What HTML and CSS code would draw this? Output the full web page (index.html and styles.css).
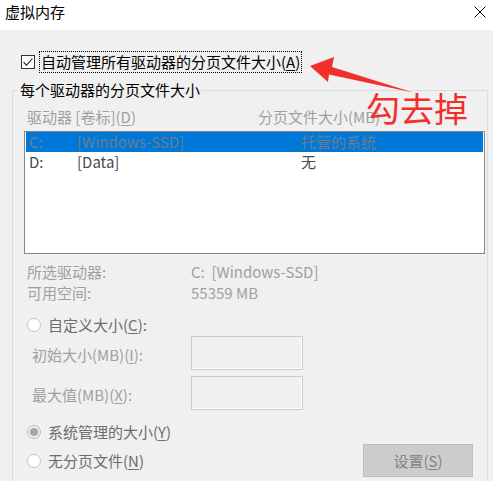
FILE: index.html
```html
<!DOCTYPE html>
<html lang="zh-CN">
<head>
<meta charset="utf-8">
<title>虚拟内存</title>
<link rel="stylesheet" href="styles.css">
</head>
<body>
<div class="window">
  <div class="titlebar">
    <span class="title">虚拟内存</span>
    <svg class="close" width="12" height="12" viewBox="0 0 12 12"><path d="M0.5 0.5L11.5 11.5M11.5 0.5L0.5 11.5" stroke="#000" stroke-width="1" fill="none"/></svg>
  </div>
  <div class="content">
    <div class="auto-row">
      <span class="checkbox"><svg width="12" height="12" viewBox="0 0 12 12"><path d="M1.5 6.2L4.5 9.2L10.5 2.5" stroke="#222" stroke-width="1.1" fill="none"/></svg></span>
      <span class="focus">自动管理所有驱动器的分页文件大小(<u>A</u>)</span>
    </div>
    <fieldset class="group">
      <legend>每个驱动器的分页文件大小</legend>
      <div class="group-body">
        <div class="col-head"><span>驱动器 [卷标](<u>D</u>)</span><span>分页文件大小(MB)</span></div>
        <div class="list">
          <div class="row sel"><span>C:</span><span>[Windows-SSD]</span><span>托管的系统</span></div>
          <div class="row"><span>D:</span><span>[Data]</span><span>无</span></div>
        </div>
        <div class="info">
          <span>所选驱动器:</span><span>C:&nbsp; [Windows-SSD]</span>
          <span>可用空间:</span><span>55359 MB</span>
        </div>
        <div class="radio-row first"><span class="radio"></span><span class="rlabel">自定义大小(<u>C</u>):</span></div>
        <div class="size-row"><span class="slabel">初始大小(MB)(<u>I</u>):</span><span class="sbox"></span></div>
        <div class="size-row second"><span class="slabel">最大值(MB)(<u>X</u>):</span><span class="sbox"></span></div>
        <div class="radio-row sys"><span class="radio checked"></span><span class="rlabel">系统管理的大小(<u>Y</u>)</span></div>
        <div class="last-row">
          <div class="radio-inline"><span class="radio"></span><span class="rlabel">无分页文件(<u>N</u>)</span></div>
          <span class="btn">设置(<u>S</u>)</span>
        </div>
      </div>
    </fieldset>
  </div>
  <svg class="arrow" width="493" height="481" viewBox="0 0 493 481">
    <polygon points="310,66 334,57 332,67 413,92.5 329,74.5 328,82" fill="#f0302a"/>
  </svg>
  <div class="note">勾去掉</div>
</div>
</body>
</html>
```
FILE: styles.css
```css
* { box-sizing: border-box; }
html, body { margin: 0; padding: 0; }
body {
  background: #f0f0f0;
  font-family: "Noto Sans CJK SC", "Noto Sans", sans-serif;
  font-size: 15px;
  color: #000;
}
u { text-underline-offset: 2px; text-decoration-thickness: 1px; }
.window {
  position: relative;
  width: 493px;
  height: 481px;
  overflow: hidden;
  background: #f0f0f0;
}
.titlebar {
  height: 30px;
  background: #fff;
  display: flex;
  justify-content: space-between;
  align-items: flex-start;
  padding: 0 7px 0 5px;
}
.title { line-height: 20px; margin-top: 2px; }
.close { margin-top: 6px; }
.content { padding-top: 21px; }
.auto-row {
  display: flex;
  align-items: center;
  margin-left: 21px;
  height: 22px;
}
.checkbox {
  width: 14px;
  height: 14px;
  border: 1px solid #333;
  background: #fff;
  margin-right: 4px;
  display: flex;
  align-items: center;
  justify-content: center;
}
.focus {
  border: 1px dotted #000;
  padding: 0 1px;
  line-height: 20px;
}
.group {
  margin: 7px 5px 0 12px;
  padding: 0;
  border: 1px solid #dcdcdc;
  min-width: 0;
  height: 420px;
}
.group legend {
  margin-left: 5px;
  padding: 0 2px;
  line-height: 20px;
}
.group-body { padding: 7px 2px 0 11px; }
.col-head {
  display: grid;
  grid-template-columns: 231px 1fr;
  padding-left: 3px;
  line-height: 20px;
  color: #a0a0a0;
}
.list {
  margin-top: 4px;
  height: 123px;
  border: 1px solid #828790;
  background: #fff;
  padding: 0 1px;
}
.row {
  display: grid;
  grid-template-columns: 48px 224px 1fr;
  padding-left: 3px;
  height: 20px;
  line-height: 20px;
  color: #4a4a4a;
}
.row.sel { background: #0078d7; color: #6a7d92; }
.info {
  margin-top: 7px;
  display: grid;
  grid-template-columns: 164px 1fr;
  padding-left: 3px;
  line-height: 21px;
  color: #a0a0a0;
}
.radio-row, .radio-inline {
  display: flex;
  align-items: center;
  height: 20px;
  line-height: 20px;
}
.radio-row.first { margin-top: 12px; }
.radio-row.sys { margin-top: 12px; }
.radio {
  width: 14px;
  height: 14px;
  border-radius: 50%;
  border: 1px solid #c4c4c4;
  background: #fff;
  margin-left: 3px;
  margin-right: 7px;
  flex: none;
  display: flex;
  align-items: center;
  justify-content: center;
}
.radio.checked::after {
  content: "";
  width: 8px;
  height: 8px;
  border-radius: 50%;
  background: #a8a8a8;
}
.radio.checked { background: #f0f0f0; border-color: #bcbcbc; }
.rlabel { color: #6d6d6d; }
.size-row {
  display: flex;
  align-items: center;
  height: 34px;
  margin-top: 1px;
}
.size-row.second { margin-top: 6px; }
.slabel {
  width: 167px;
  padding-left: 8px;
  padding-top: 3px;
  color: #a0a0a0;
  line-height: 20px;
}
.sbox {
  width: 112px;
  height: 34px;
  border: 1px solid #cccccc;
  background: #f0f0f0;
  box-shadow: inset -1px -1px 0 #fff;
}
.last-row {
  margin-top: 2px;
  display: flex;
  justify-content: space-between;
  align-items: center;
  height: 33px;
}
.btn {
  width: 110px;
  height: 33px;
  margin-right: 12px;
  background: #cccccc;
  border: 1px solid #bfbfbf;
  color: #838383;
  display: flex;
  align-items: center;
  justify-content: center;
  line-height: 20px;
}
.arrow {
  position: absolute;
  left: 0;
  top: 0;
  pointer-events: none;
}
.note {
  position: absolute;
  left: 366px;
  top: 91px;
  font-size: 34px;
  line-height: 1;
  color: #f0302a;
  letter-spacing: 0;
}
```
